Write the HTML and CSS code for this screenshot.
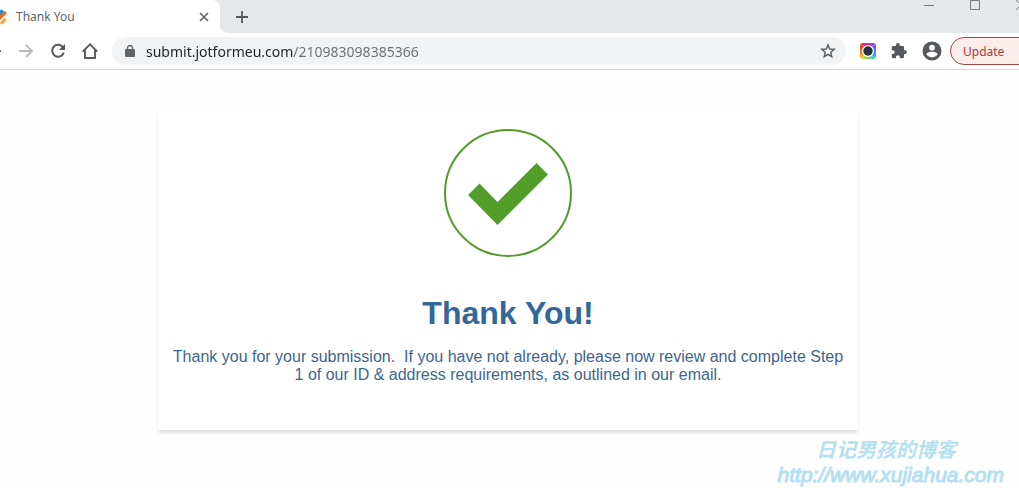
FILE: index.html
```html
<!DOCTYPE html>
<html lang="en">
<head>
<meta charset="utf-8">
<title>Thank You</title>
<link rel="stylesheet" href="styles.css">
</head>
<body>
<div class="browser">
  <header class="tabstrip">
    <div class="tab">
      <svg class="favicon" viewBox="0 0 16 16" aria-hidden="true">
        <g fill="none" stroke-linecap="round" stroke-width="3.600">
          <path d="M3 9 10.500 2.500" stroke="#0a8fe0"/>
          <path d="M5.500 12 13.500 4" stroke="#f26522"/>
          <path d="M11 13.500 13.500 11" stroke="#f9b04b"/>
        </g>
      </svg>
      <span class="tab-title">Thank You</span>
      <button class="icon-button" aria-label="Close tab"><svg width="10" height="10" viewBox="0 0 10 10"><path d="M1 1 9 9M9 1 1 9" stroke="#5f6368" stroke-width="1.600"/></svg></button>
    </div>
    <div class="strip-rest">
      <button class="icon-button" aria-label="New tab"><svg width="12" height="12" viewBox="0 0 12 12"><path d="M6 0V12M0 6H12" stroke="#55595d" stroke-width="1.800"/></svg></button>
      <div class="window-controls">
        <button class="icon-button" aria-label="Minimize"><svg width="10" height="10" viewBox="0 0 10 10"><path d="M0 5.500H10" stroke="#777"/></svg></button>
        <button class="icon-button" aria-label="Maximize"><svg width="10" height="10" viewBox="0 0 10 10"><path d="M.5.5H9.500V9.500H.5Z" fill="none" stroke="#777"/></svg></button>
        <button class="icon-button" aria-label="Close window"><svg width="10" height="10" viewBox="0 0 10 10"><path d="M0 0 10 10M10 0 0 10" stroke="#777"/></svg></button>
      </div>
    </div>
  </header>
  <nav class="toolbar" aria-label="Browser toolbar">
    <div class="nav-buttons">
      <button class="icon-button" aria-label="Back"><svg width="16" height="16" viewBox="0 0 16 16"><path d="M15 8H2M8 2 2 8 8 14" fill="none" stroke="#5f6368" stroke-width="1.800"/></svg></button>
      <button class="icon-button" aria-label="Forward"><svg width="16" height="16" viewBox="0 0 16 16"><path d="M1 8H14M8 2 14 8 8 14" fill="none" stroke="#b7babd" stroke-width="1.800"/></svg></button>
      <button class="icon-button" aria-label="Reload"><svg width="16" height="16" viewBox="0 0 16 16"><path d="M13.200 4.500A6 6 0 1 0 13.800 9.700" fill="none" stroke="#55595d" stroke-width="2"/><path d="M15 1V7H9Z" fill="#55595d"/></svg></button>
      <button class="icon-button" aria-label="Home"><svg width="16" height="16" viewBox="0 0 16 16"><path d="M.7 8.600 8 1.400 15.300 8.600M3 7V15H13V7" fill="none" stroke="#55595d" stroke-width="1.900"/></svg></button>
    </div>
    <form class="omnibox">
      <svg width="10" height="12" viewBox="0 0 10 12" aria-hidden="true"><rect y="4" width="10" height="8" rx="1" fill="#5f6368"/><path d="M2.500 5V3A2.500 2.500 0 0 1 7.500 3V5" fill="none" stroke="#5f6368" stroke-width="1.300"/></svg>
      <input class="address" type="text" aria-label="Address" value="submit.jotformeu.com/210983098385366">
      <button class="icon-button" type="button" aria-label="Bookmark this page"><svg width="16" height="16" viewBox="0 0 16 16"><path d="M8 1.900 9.700 6 14.200 6.400 10.800 9.300 11.800 13.700 8 11.400 4.200 13.700 5.200 9.300 1.800 6.400 6.300 6Z" fill="none" stroke="#55595d" stroke-width="1.400"/></svg></button>
    </form>
    <div class="extensions">
      <button class="icon-button" aria-label="Screenshot extension"><svg width="16" height="16" viewBox="0 0 16 16">
        <defs>
          <linearGradient id="lens-top" x1="0" y1="0" x2="1" y2="0"><stop offset="0" stop-color="#e3262e"/><stop offset=".5" stop-color="#ec24a0"/><stop offset="1" stop-color="#7b42ee"/></linearGradient>
          <linearGradient id="lens-right" x1="0" y1="0" x2="0" y2="1"><stop offset="0" stop-color="#7b42ee"/><stop offset="1" stop-color="#20c5ee"/></linearGradient>
          <linearGradient id="lens-bottom" x1="0" y1="0" x2="1" y2="0"><stop offset="0" stop-color="#f5d921"/><stop offset="1" stop-color="#20d1be"/></linearGradient>
          <linearGradient id="lens-left" x1="0" y1="0" x2="0" y2="1"><stop offset="0" stop-color="#e3262e"/><stop offset="1" stop-color="#f5c921"/></linearGradient>
          <clipPath id="lens-shape"><rect width="16" height="16" rx="3"/></clipPath>
        </defs>
        <g clip-path="url(#lens-shape)"><path d="M0 0H16L8 8Z" fill="url(#lens-top)"/><path d="M16 0V16L8 8Z" fill="url(#lens-right)"/><path d="M0 16H16L8 8Z" fill="url(#lens-bottom)"/><path d="M0 0V16L8 8Z" fill="url(#lens-left)"/></g>
        <circle cx="8" cy="8" r="6" fill="#fff"/><circle cx="8" cy="8" r="4.700" fill="#26343f"/></svg></button>
      <button class="icon-button" aria-label="Extensions"><svg width="16" height="16" viewBox="1 1 22 22"><path fill="#55595d" d="M20.500 11H19V7c0-1.100-.9-2-2-2h-4V3.500a2.500 2.500 0 0 0-5 0V5H4c-1.100 0-2 .9-2 2v3.800h1.500a2.700 2.700 0 0 1 0 5.400H2V20c0 1.100.9 2 2 2h3.800v-1.500a2.700 2.700 0 0 1 5.400 0V22H17c1.100 0 2-.9 2-2v-4h1.500a2.500 2.500 0 0 0 0-5z"/></svg></button>
      <button class="icon-button" aria-label="Profile"><svg width="20" height="20" viewBox="0 0 20 20"><circle cx="10" cy="10" r="9.500" fill="#55595d"/><circle cx="10" cy="6.700" r="2.900" fill="#fff"/><path d="M4.300 13.300C5 11.400 8 10.800 10 10.800S15 11.400 15.700 13.300A6.800 6.800 0 0 1 4.300 13.300Z" fill="#fff"/></svg></button>
    </div>
    <button class="update">Update</button>
  </nav>
  <main class="page">
    <section class="card">
      <svg class="check" width="128" height="128" viewBox="0 0 128 128" role="img" aria-label="Success"><circle cx="64" cy="64" r="63" fill="none" stroke="#559c2b" stroke-width="2"/><path d="M24 66 35.500 54.500 53.500 73 92.500 34 104 45.500 53.500 96Z" fill="#529e29"/></svg>
      <h1 class="title">Thank You!</h1>
      <p class="message">Thank you for your submission.&nbsp; If you have not already, please now review and complete Step 1 of our ID &amp; address requirements, as outlined in our email.</p>
    </section>
  </main>
  <div class="watermark">
    <div class="watermark-name" lang="zh">日记男孩的博客</div>
    <div class="watermark-url">http://www.xujiahua.com</div>
  </div>
</div>
</body>
</html>
```
FILE: styles.css
```css
* {
  box-sizing: border-box;
}

body {
  margin: 0;
  background: #fefefe;
  font-family: "Liberation Sans", Arial, sans-serif;
}

.browser {
  position: relative;
  min-height: 100vh;
  overflow: hidden;
}

.icon-button {
  display: flex;
  flex: none;
  padding: 0;
  border: 0;
  background: none;
}

.tabstrip {
  display: flex;
  height: 33px;
  background: linear-gradient(90deg, #fff 212px, #e4e8eb 212px) top / 100% 16px no-repeat, #fff;
}

.tab {
  display: flex;
  align-items: center;
  width: 220px;
  padding-right: 11px;
  border-top-right-radius: 8px;
  background: #fff;
  color: #5f6368;
  font: 12px "Noto Sans", sans-serif;
}

.favicon {
  flex: none;
  width: 16px;
  height: 16px;
  margin: 0 9px 0 -9px;
}

.tab-title {
  flex: 1;
}

.strip-rest {
  display: flex;
  flex: 1;
  align-items: center;
  justify-content: space-between;
  padding-left: 16px;
  background: #e4e8eb;
  border-bottom-left-radius: 8px;
}

.window-controls {
  display: flex;
  align-self: flex-start;
  gap: 36px;
  margin-right: -7px;
}

.toolbar {
  display: flex;
  align-items: center;
  height: 37px;
  background: #fff;
  border-bottom: 1px solid #d5d7d9;
}

.nav-buttons {
  display: flex;
  gap: 16px;
  margin: 0 14px 0 -14px;
}

.omnibox {
  display: flex;
  flex: 1;
  align-items: center;
  gap: 11px;
  height: 28px;
  padding: 0 10px 0 13px;
  border-radius: 14px;
  background: #f1f3f4;
}

.address {
  flex: 1;
  min-width: 0;
  height: 28px;
  padding: 0;
  border: 0;
  outline: 0;
  background: linear-gradient(90deg, #202124 147px, #6b6f73 147px);
  background-clip: text;
  color: transparent;
  font: 14px "Noto Sans", sans-serif;
}

.extensions {
  display: flex;
  align-items: center;
  gap: 15px;
  margin: 0 8px 0 14px;
}

.update {
  height: 28px;
  width: 84px;
  margin-right: -15px;
  padding: 0 12px;
  border: 1px solid #a8474a;
  border-radius: 14px;
  background: #fcecec;
  color: #a8393d;
  font: 12px "Noto Sans", sans-serif;
  text-align: left;
}

.page {
  padding: 40px 3px 0 0;
}

.card {
  max-width: 700px;
  margin: 0 auto;
  padding: 19px 12px 46px;
  background: #fff;
  box-shadow: 0 3px 4px -1px rgba(0, 0, 0, 0.16);
  color: #40668b;
  text-align: center;
}

.check {
  display: block;
  margin: 0 auto;
}

.title {
  margin: 38px 0 16px;
  color: #346799;
  font-size: 32px;
  line-height: 37px;
}

.message {
  margin: 0;
  font-size: 16px;
  line-height: 18px;
}

.watermark {
  position: absolute;
  right: 15px;
  bottom: 0;
  color: #b6dff0;
  text-align: right;
  font-style: italic;
}

.watermark-name {
  padding-right: 48px;
  font: italic bold 20px/24px "Noto Sans CJK SC", sans-serif;
}

.watermark-url {
  font-size: 21px;
  line-height: 27px;
  -webkit-text-stroke: 1px;
}
```
